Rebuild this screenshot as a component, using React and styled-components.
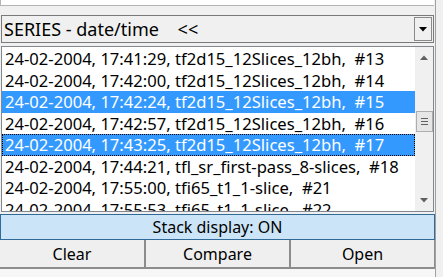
import React from "react";
import styled, { createGlobalStyle } from "styled-components";

const GlobalStyle = createGlobalStyle`
  html, body {
    margin: 0;
    padding: 0;
    background: #f0f0f0;
    overflow: hidden;
  }
  body {
    font-family: "Noto Sans", "Open Sans", sans-serif;
  }
`;

const Window = styled.div`
  width: 443px;
  height: 277px;
  display: flex;
  background: #f0f0f0;
`;

const Panel = styled.div`
  width: 436px;
  display: flex;
  flex-direction: column;
  border-right: 1px solid #a0a0a0;
  box-sizing: border-box;
`;

const SideStrip = styled.div`
  flex: 1;
  background: #f0f0f0;
`;

const TopField = styled.div`
  height: 5px;
  background: #ffffff;
  border-bottom: 1px solid #b4b4b4;
  border-left: 1px solid #b4b4b4;
  margin-right: 1px;
`;

const Combo = styled.div`
  margin-top: 9px;
  height: 28px;
  margin-left: 1px;
  margin-right: 1px;
  box-sizing: border-box;
  border: 1px solid #7a7a7a;
  background: #f0f0f0;
  display: flex;
  align-items: center;
  font-size: 18px;
  color: #000;
`;

const ComboText = styled.span`
  flex: 1;
  padding-left: 2px;
  white-space: pre;
`;

const ComboButton = styled.div`
  width: 18px;
  height: 24px;
  margin-right: 1px;
  box-sizing: border-box;
  border: 1px solid #8a8a8a;
  background: #f0f0f0;
  display: flex;
  align-items: center;
  justify-content: center;
`;

const List = styled.div`
  margin-top: 3px;
  margin-left: 1px;
  margin-right: 1px;
  height: 166px;
  box-sizing: border-box;
  border: 1px solid #828790;
  background: #fff;
  display: flex;
  overflow: hidden;
`;

const Rows = styled.div`
  flex: 1;
  overflow: hidden;
  padding-top: 1px;
`;

const Row = styled.div`
  height: 21.5px;
  line-height: 21.5px;
  font-size: 16.6px;
  padding-left: 3px;
  white-space: pre;
  color: ${(p) => (p.$selected ? "#fff" : "#000")};
  background: ${(p) => (p.$selected ? "#3399ff" : "transparent")};
  outline: ${(p) => (p.$focused ? "1px dotted #000" : "none")};
  outline-offset: -1px;
`;

const ScrollBar = styled.div`
  width: 18px;
  background: #f0f0f0;
  display: flex;
  flex-direction: column;
  align-items: center;
  padding: 8px 0 8px;
  box-sizing: border-box;
`;

const Thumb = styled.div`
  width: 17px;
  height: 21px;
  margin-top: 51px;
  box-sizing: border-box;
  border: 1px solid #adadad;
  background: #e6e6e6;
  display: flex;
  flex-direction: column;
  align-items: center;
  justify-content: center;
  gap: 2px;
`;

const Grip = styled.span`
  width: 7px;
  height: 1px;
  background: #606060;
`;

const Spacer = styled.div`
  flex: 1;
`;

const StackBox = styled.div`
  margin-top: 2px;
  height: 26px;
  box-sizing: border-box;
  border: 1px solid #2f6a99;
  background: #cce4f7;
  display: flex;
  align-items: center;
  justify-content: center;
  font-size: 16px;
  color: #000;
`;

const ButtonRow = styled.div`
  display: grid;
  grid-template-columns: 146px 145px 1fr;
  height: 27px;
`;

const Button = styled.div`
  box-sizing: border-box;
  border-right: 2px solid #8c8c8c;
  background: #efefef;
  display: flex;
  align-items: center;
  justify-content: center;
  font-size: 16px;
  color: #000;
  &:last-child {
    border-right: 1px solid #8c8c8c;
  }
`;

const StatusBar = styled.div`
  flex: 1;
  border-top: 2px solid #8c8c8c;
  background: #f7f7f7;
`;

const Arrow = ({ dir = "down", color = "#000" }) => (
  <svg width="8" height="5" viewBox="0 0 8 5">
    {dir === "down" ? (
      <path d="M0 0h8L4 4.5z" fill={color} />
    ) : (
      <path d="M0 5h8L4 0.5z" fill={color} />
    )}
  </svg>
);

const rows = [
  { text: "24-02-2004, 17:41:29, tf2d15_12Slices_12bh,  #13" },
  { text: "24-02-2004, 17:42:00, tf2d15_12Slices_12bh,  #14" },
  { text: "24-02-2004, 17:42:24, tf2d15_12Slices_12bh,  #15", selected: true },
  { text: "24-02-2004, 17:42:57, tf2d15_12Slices_12bh,  #16" },
  { text: "24-02-2004, 17:43:25, tf2d15_12Slices_12bh,  #17", selected: true, focused: true },
  { text: "24-02-2004, 17:44:21, tfl_sr_first-pass_8-slices,  #18" },
  { text: "24-02-2004, 17:55:00, tfi65_t1_1-slice,  #21" },
  { text: "24-02-2004, 17:55:53, tfi65_t1_1-slice,  #22" },
];

export default function App() {
  return (
    <>
      <GlobalStyle />
      <Window>
        <Panel>
          <TopField />
          <Combo>
            <ComboText>SERIES - date/time    {"<<"}</ComboText>
            <ComboButton>
              <Arrow dir="down" />
            </ComboButton>
          </Combo>
          <List>
            <Rows>
              {rows.map((r) => (
                <Row key={r.text} $selected={r.selected} $focused={r.focused}>
                  {r.text}
                </Row>
              ))}
            </Rows>
            <ScrollBar>
              <Arrow dir="up" color="#606060" />
              <Thumb>
                <Grip />
                <Grip />
                <Grip />
              </Thumb>
              <Spacer />
              <Arrow dir="down" color="#606060" />
            </ScrollBar>
          </List>
          <StackBox>Stack display: ON</StackBox>
          <ButtonRow>
            <Button>Clear</Button>
            <Button>Compare</Button>
            <Button>Open</Button>
          </ButtonRow>
          <StatusBar />
        </Panel>
        <SideStrip />
      </Window>
    </>
  );
}
